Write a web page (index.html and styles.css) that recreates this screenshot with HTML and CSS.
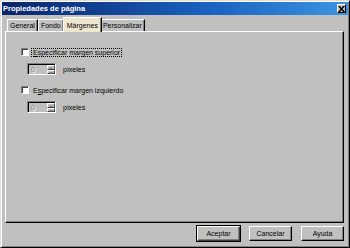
FILE: index.html
```html
<!DOCTYPE html>
<html lang="es">
<head>
    <meta charset="UTF-8">
    <title>Propiedades de página</title>
    <link rel="stylesheet" href="styles.css">
</head>
<body>

    <div class="window">
        <div class="titlebar">
            <span>Propiedades de página</span>
            <span class="close">
                <svg width="7" height="6" viewBox="0 0 7 6"><path d="M0 0h2l1.5 2 1.5-2h2l-2.5 3 2.5 3h-2l-1.5-2-1.5 2h-2l2.5-3z" fill="#000"/></svg>
            </span>
        </div>

        <div class="main">
            <!-- Pestañas -->
            <div class="tabs">
                <div class="tab">General</div>
                <div class="tab">Fondo</div>
                <div class="tab active">Márgenes</div>
                <div class="tab">Personalizar</div>
            </div>

            <div class="panel">
                <div class="check-row">
                    <span class="checkbox"></span>
                    <span class="label focus"><u>E</u>specificar margen superior</span>
                </div>
                <div class="spin-row">
                    <div class="spinner">
                        <span class="spin-value">0</span>
                        <span class="spin-arrows">
                            <span class="arrow up"></span>
                            <span class="arrow down"></span>
                        </span>
                    </div>
                    <span class="unit">píxeles</span>
                </div>

                <div class="check-row second">
                    <span class="checkbox"></span>
                    <span class="label">E<u>s</u>pecificar margen izquierdo</span>
                </div>
                <div class="spin-row">
                    <div class="spinner">
                        <span class="spin-value">0</span>
                        <span class="spin-arrows">
                            <span class="arrow up"></span>
                            <span class="arrow down"></span>
                        </span>
                    </div>
                    <span class="unit">píxeles</span>
                </div>
            </div>

            <div class="buttons">
                <button class="btn default">Aceptar</button>
                <button class="btn">Cancelar</button>
                <button class="btn">Ayuda</button>
            </div>
        </div>
    </div>

</body>
</html>
```

FILE: styles.css
```css
body {
    margin: 0;
    font-family: "Liberation Sans", Arial, sans-serif;
    font-size: 7px;
    color: #000;
}
.window {
    width: 350px;
    height: 248px;
    box-sizing: border-box;
    background-color: #c0c0c0;
    border: 1px solid;
    border-color: #dfdfdf #000 #000 #dfdfdf;
    box-shadow: inset 1px 1px #fff, inset -1px -1px #808080;
    padding: 1px;
    display: flex;
    flex-direction: column;
}
.titlebar {
    height: 13px;
    background: linear-gradient(to right, #0a246a, #1a62c0 60%, #3c94e2);
    color: #fff;
    font-weight: bold;
    font-size: 7.5px;
    display: flex;
    align-items: center;
    justify-content: space-between;
    padding: 0 2px 0 1px;
}
.close {
    width: 9px;
    height: 9px;
    box-sizing: border-box;
    background-color: #c0c0c0;
    border: 1px solid;
    border-color: #fff #000 #000 #fff;
    display: flex;
    align-items: center;
    justify-content: center;
}
.main {
    flex: 1;
    display: flex;
    flex-direction: column;
    padding: 2px 4px 5px 3px;
}
.tabs {
    height: 14px;
    display: flex;
    align-items: flex-end;
    padding-left: 2px;
}
.tab {
    height: 12px;
    box-sizing: border-box;
    padding: 0 2px;
    border: 1px solid;
    border-bottom: none;
    border-color: #fff #000 #000 #fff;
    box-shadow: inset -1px 0 #808080;
    display: flex;
    align-items: center;
}
.tab.active {
    height: 15px;
    margin: 0 -1px -1px -1px;
    padding: 0 3px;
    background-color: #efe6cf;
    position: relative;
    z-index: 1;
}
.tab.active + .tab {
    border-left: none;
}
.panel {
    flex: 1;
    border: 1px solid;
    border-color: #fff #000 #000 #fff;
    box-shadow: inset -1px -1px #808080;
    padding: 15px 15px;
    display: flex;
    flex-direction: column;
}
.check-row {
    height: 10px;
    display: flex;
    align-items: center;
}
.check-row.second {
    margin-top: 10px;
}
.checkbox {
    width: 8px;
    height: 8px;
    box-sizing: border-box;
    background-color: #fff;
    border: 1px solid;
    border-color: #808080 #fff #fff #808080;
    box-shadow: inset 1px 1px #404040;
    margin-right: 3px;
}
.label {
    padding: 0 1px;
}
.label.focus {
    outline: 1px dotted #000;
}
.spin-row {
    display: flex;
    align-items: center;
    margin-top: 6px;
    padding-left: 6px;
}
.spinner {
    width: 29px;
    height: 12px;
    box-sizing: border-box;
    border: 1px solid;
    border-color: #808080 #fff #fff #808080;
    box-shadow: inset 1px 1px #000;
    display: flex;
    padding: 1px 0 0 1px;
}
.spin-value {
    flex: 1;
    color: #808080;
    text-shadow: 1px 1px #fff;
    padding-left: 2px;
    line-height: 10px;
}
.spin-arrows {
    width: 8px;
    display: flex;
    flex-direction: column;
}
.arrow {
    flex: 1;
    box-sizing: border-box;
    border: 1px solid;
    border-color: #fff #404040 #404040 #fff;
    position: relative;
}
.arrow::after {
    content: "";
    position: absolute;
    left: 1px;
    top: 1px;
    border-left: 2px solid transparent;
    border-right: 2px solid transparent;
}
.arrow.up::after {
    border-bottom: 2px solid #808080;
}
.arrow.down::after {
    border-top: 2px solid #808080;
}
.unit {
    margin-left: 7px;
}
.buttons {
    height: 15px;
    margin-top: 3px;
    display: flex;
    justify-content: flex-end;
    gap: 9px;
}
.btn {
    width: 43px;
    height: 15px;
    box-sizing: border-box;
    padding: 0;
    font-family: inherit;
    font-size: 7px;
    color: #000;
    background-color: #c0c0c0;
    border: 1px solid;
    border-color: #fff #000 #000 #fff;
    box-shadow: inset -1px -1px #808080;
}
.btn.default {
    outline: 1px solid #000;
    outline-offset: 0;
    border-color: #fff #404040 #404040 #fff;
}
```
